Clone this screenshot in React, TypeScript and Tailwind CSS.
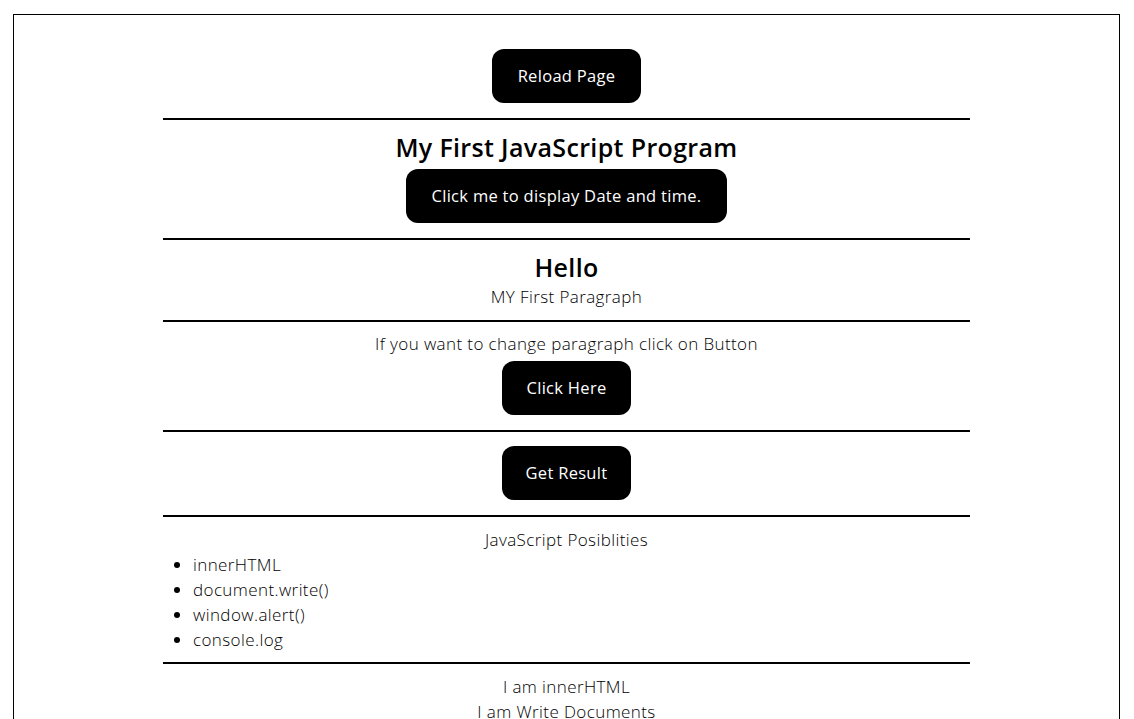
import React from "react";

const font = { fontFamily: '"Open Sans", "Noto Sans", sans-serif' };

function Btn({ w, children }: { w: string; children: React.ReactNode }) {
  return (
    <button
      className={`${w} h-[54px] rounded-xl bg-black text-white text-[16.5px] tracking-[0.3px] font-normal flex items-center justify-center`}
    >
      {children}
    </button>
  );
}

function Line() {
  return <div className="h-[2px] w-full bg-black" />;
}

export default function App() {
  return (
    <div className="bg-white min-h-[719px] pt-[14px] px-[13px] text-black" style={font}>
      <div className="w-[1107px] h-[720px] border border-black border-b-0 overflow-hidden">
        <div className="w-[807px] mx-auto flex flex-col">
          <section className="h-[103px] pt-[34px] flex flex-col items-center">
            <Btn w="w-[149px]">Reload Page</Btn>
          </section>
          <Line />
          <section className="h-[118px] pt-[12px] flex flex-col items-center">
            <h1 className="h-[30px] leading-[30px] text-[25px] tracking-[0.35px] font-semibold">My First JavaScript Program</h1>
            <div className="h-[7px]" />
            <Btn w="w-[321px]">Click me to display Date and time.</Btn>
          </section>
          <Line />
          <section className="h-[80px] pt-[12px] flex flex-col items-center">
            <h2 className="h-[30px] leading-[30px] text-[25px] tracking-[0.35px] font-semibold">Hello</h2>
            <div className="h-[3px]" />
            <p className="h-[24px] leading-[24px] text-[17px] tracking-[0.4px] font-light">MY First Paragraph</p>
          </section>
          <Line />
          <section className="h-[108px] pt-[10px] flex flex-col items-center">
            <p className="h-[24px] leading-[24px] text-[17px] tracking-[0.4px] font-light">If you want to change paragraph click on Button</p>
            <div className="h-[5px]" />
            <Btn w="w-[129px]">Click Here</Btn>
          </section>
          <Line />
          <section className="h-[83px] pt-[14px] flex flex-col items-center">
            <Btn w="w-[129px]">Get Result</Btn>
          </section>
          <Line />
          <section className="h-[145px] pt-[10px] flex flex-col text-[17px] tracking-[0.4px] font-light">
            <p className="h-[25px] leading-[25px] text-center">JavaScript Posiblities</p>
            <ul className="list-disc pl-[30px]">
              <li className="h-[25px] leading-[25px]">innerHTML</li>
              <li className="h-[25px] leading-[25px]">document.write()</li>
              <li className="h-[25px] leading-[25px]">window.alert()</li>
              <li className="h-[25px] leading-[25px]">console.log</li>
            </ul>
          </section>
          <Line />
          <section className="pt-[10px] flex flex-col items-center text-[17px] tracking-[0.4px] font-light">
            <p className="h-[25px] leading-[25px]">I am innerHTML</p>
            <p className="h-[25px] leading-[25px]">I am Write Documents</p>
          </section>
        </div>
      </div>
    </div>
  );
}
